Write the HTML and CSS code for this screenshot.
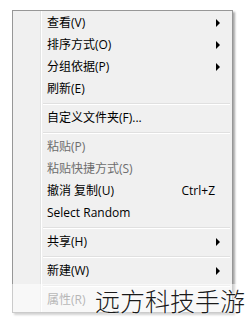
FILE: index.html
```html
<!DOCTYPE html>
<html>
<head>
<meta charset="utf-8">
<link rel="stylesheet" href="styles.css">
</head>
<body>
<div class="stage">
  <div class="menu">
    <div class="item"><span class="label">查看(V)</span><span class="arrow"></span></div>
    <div class="item"><span class="label">排序方式(O)</span><span class="arrow"></span></div>
    <div class="item"><span class="label">分组依据(P)</span><span class="arrow"></span></div>
    <div class="item"><span class="label">刷新(E)</span></div>
    <div class="sep"></div>
    <div class="item"><span class="label">自定义文件夹(F)...</span></div>
    <div class="sep"></div>
    <div class="item disabled"><span class="label">粘贴(P)</span></div>
    <div class="item disabled"><span class="label">粘贴快捷方式(S)</span></div>
    <div class="item"><span class="label">撤消 复制(U)</span><span class="shortcut">Ctrl+Z</span></div>
    <div class="item"><span class="label">Select Random</span></div>
    <div class="sep"></div>
    <div class="item"><span class="label">共享(H)</span><span class="arrow"></span></div>
    <div class="sep"></div>
    <div class="item"><span class="label">新建(W)</span><span class="arrow"></span></div>
    <div class="sep"></div>
    <div class="item disabled"><span class="label">属性(R)</span></div>
  </div>
  <div class="watermark"><span class="wm-text">远方科技手游</span></div>
</div>
</body>
</html>
```
FILE: styles.css
```css
* { box-sizing: border-box; }
html, body { margin: 0; padding: 0; background: #fff; }
body {
  width: 247px;
  height: 326px;
  overflow: hidden;
  font-family: "Open Sans", "Noto Sans CJK SC", sans-serif;
  font-size: 12px;
  color: #000;
}
.stage {
  position: relative;
  width: 247px;
  height: 326px;
  padding: 10px 0 0 12px;
}
.menu {
  width: 221px;
  border: 1px solid #979797;
  padding: 1px;
  background-color: #f0f0f0;
  background-image: linear-gradient(to right, transparent 27px, #e2e3e3 27px, #e2e3e3 28px, #ffffff 28px, #ffffff 29px, transparent 29px);
  box-shadow: 2px 2px 2px rgba(0,0,0,0.35);
  display: flex;
  flex-direction: column;
}
.item {
  height: 22px;
  display: flex;
  align-items: center;
  padding-left: 33px;
  padding-right: 10px;
  white-space: nowrap;
}
.label { flex: 1; line-height: 22px; }
.disabled { color: #6d6d6d; }
.shortcut { margin-right: 6px; line-height: 22px; }
.arrow {
  width: 0;
  height: 0;
  border-top: 4px solid transparent;
  border-bottom: 4px solid transparent;
  border-left: 4px solid #000;
  margin-right: 1px;
}
.sep {
  height: 7px;
  margin-left: 29px;
  margin-right: 1px;
  padding-top: 3px;
}
.sep::before {
  content: "";
  display: block;
  height: 1px;
  background: #e0e0e0;
  border-bottom: 1px solid #fff;
  box-sizing: content-box;
}
.watermark {
  position: absolute;
  left: 0;
  top: 284px;
  width: 247px;
  height: 34px;
  background: rgba(255,255,255,0.5);
}
.wm-text {
  position: absolute;
  left: 95px;
  top: 1px;
  font-family: "Noto Sans CJK SC", sans-serif;
  font-weight: 300;
  font-size: 25px;
  line-height: 30px;
  letter-spacing: 0px;
  color: #1a1a1a;
  text-shadow: 0 0 2px #fff, 0 0 2px #fff;
  white-space: nowrap;
}
```
